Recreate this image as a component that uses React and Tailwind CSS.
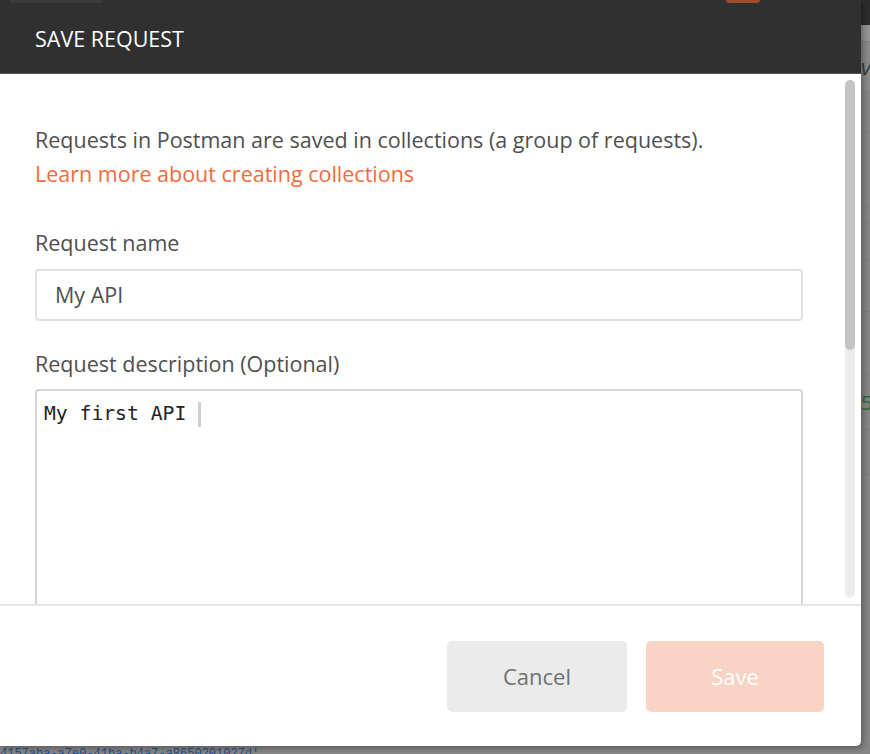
export default function App() {
  return (
    <div className="relative w-[870px] h-[754px] overflow-hidden bg-[#868686] font-['Open_Sans',sans-serif]">
      {/* background app peeking behind the overlay */}
      <div className="absolute left-[861px] top-0 w-[9px] h-[754px] flex flex-col">
        <div className="h-[25px] bg-[#2c2c2c]" />
        <div className="h-[17px] bg-[#959595] border-b border-[#7e7e7e]" />
        <div className="h-[48px] bg-[#8a8a8a] text-[#3a3a3a] text-[22px] leading-[48px] italic overflow-hidden whitespace-nowrap">vi</div>
        <div className="h-[42px] border-b border-[#7e7e7e]" />
        <div className="h-[75px] border-b border-[#7e7e7e]" />
        <div className="h-[16px] border-b border-[#7e7e7e]" />
        <div className="h-[37px] border-b border-[#7e7e7e]" />
        <div className="h-[52px] border-b border-[#7e7e7e]" />
        <div className="h-[63px] border-b border-[#7e7e7e]" />
        <div className="h-[55px] border-b border-[#7e7e7e] text-[#2f6b3a] text-[20px] leading-[55px] overflow-hidden">5</div>
        <div className="h-[45px] border-b border-[#7e7e7e]" />
        <div className="flex-1 bg-[#868686]" />
      </div>
      <div className="absolute left-0 top-[742px] w-[861px] h-[12px] overflow-hidden whitespace-nowrap font-['Liberation_Mono',monospace] text-[12px] leading-[24px] text-[#1f4f8a]">
        4157aba-a7e0-41ba-b4a7-a8650201027d',
      </div>

      {/* modal */}
      <div className="absolute left-0 top-0 w-[861px] h-[746px] bg-white rounded-br-[5px] shadow-[2px_2px_6px_rgba(0,0,0,0.35)] flex flex-col overflow-hidden">
        <div className="relative h-[74px] shrink-0 bg-[#303030] flex items-center pl-[35px] pt-[6px] text-white text-[21.5px] border-b border-[#555]">
          <div className="absolute left-[10px] top-0 w-[93px] h-[3px] bg-[#3a3a3a]" />
          <div className="absolute left-[726px] top-0 w-[34px] h-[3px] bg-[#9a4e2a] rounded-b-[6px]" />
          SAVE REQUEST
        </div>

        <div className="flex h-[530px] shrink-0 overflow-hidden">
          <div className="w-[803px] shrink-0 pl-[35px] pt-[49px] flex flex-col text-[#505050] text-[21.5px] leading-[34px]">
            <p className="shrink-0">Requests in Postman are saved in collections (a group of requests).</p>
            <p className="shrink-0 text-[#f26b3a]">Learn more about creating collections</p>
            <p className="shrink-0 mt-[35px]">Request name</p>
            <div className="shrink-0 mt-[9px] h-[52px] border-2 border-[#e2e2e2] rounded-[4px] flex items-center pl-[18px]">
              My API
            </div>
            <p className="shrink-0 mt-[26px]">Request description (Optional)</p>
            <div className="shrink-0 mt-[8px] h-[260px] border-2 border-[#d6d6d6] rounded-[4px] pl-[7px] pt-[9px] flex items-start">
              <span className="font-['DejaVu_Sans_Mono',monospace] text-[19.7px] leading-[28px] text-[#222]">My first API</span>
              <span className="ml-[12px] mt-[2px] w-[3px] h-[25px] bg-[#cfcfcf]" />
            </div>
          </div>
          <div className="ml-[42px] mt-[6px] mb-[6px] w-[10px] bg-[#ececec] rounded-full flex flex-col">
            <div className="h-[270px] bg-[#c4c4c4] rounded-full" />
          </div>
        </div>

        <div className="flex-1 border-t-2 border-[#e6e6e6] flex justify-end items-start pt-[35px] pr-[37px] gap-[19px]">
          <button className="w-[180px] h-[71px] bg-[#ebebeb] rounded-[5px] text-[#707070] text-[22px]">Cancel</button>
          <button className="w-[178px] h-[71px] bg-[#f9d3c4] rounded-[5px] text-white text-[22px]">Save</button>
        </div>
      </div>
    </div>
  );
}
